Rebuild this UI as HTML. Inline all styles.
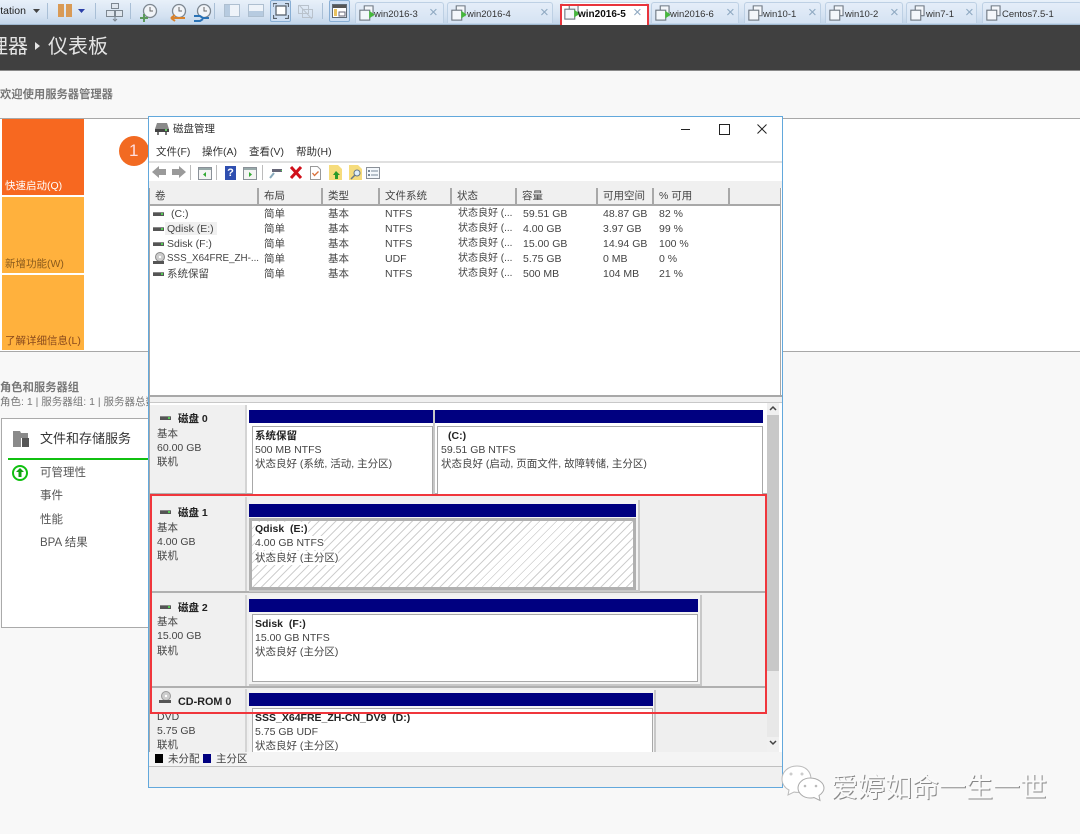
<!DOCTYPE html>
<html lang="zh"><head><meta charset="utf-8"><title>磁盘管理</title>
<style>
html{background:#f8f8f8}
html,body{margin:0;padding:0;width:1080px;height:834px;overflow:hidden}
body{position:relative;background:#f8f8f8;font-family:"Liberation Sans","Noto Sans CJK SC",sans-serif;font-size:10.5px;color:#444;filter:blur(.35px)}
.a,.t{position:absolute}
.t{white-space:nowrap;line-height:14px}
.b{font-weight:bold;color:#222}
.tab{position:absolute;top:2px;height:21px;background:linear-gradient(#e4edf8,#d5e3f3);border:1px solid #bdd0e4;border-bottom:none;border-radius:3px 3px 0 0;box-sizing:border-box}
.tab svg{transform:scale(1.1)}
.tab span{position:absolute;top:5px;font-size:9.5px;line-height:14px;color:#333;white-space:nowrap}
.tab i{position:absolute;top:2px;font-style:normal;font-size:15px;line-height:16px;color:#8fa9c2}
.sep{position:absolute;top:3px;width:1px;height:16px;background:#a9bfd6}
.hd{position:absolute;top:188px;height:18px;background:#f0f0f0;border-right:2px solid #a8a8a8;border-bottom:2px solid #a8a8a8;box-sizing:border-box;line-height:17px;padding-left:5px;color:#444;font-size:10.5px;white-space:nowrap}
.dsk{position:absolute;width:11px;height:3px;background:#555;border-top:1px solid #888}
.dsk:after{content:"";position:absolute;right:1px;top:0;width:2px;height:2px;background:#5c5}
.bar{position:absolute;height:13px;background:#000080}
.box{position:absolute;background:#fff;border:1px solid #a8a8a8;box-sizing:border-box}
.row{position:absolute;left:150px;width:617px;background:#efefef;border-bottom:2px solid #b0b0b0;box-sizing:border-box}
.lab{position:absolute;left:150px;width:97px;background:#f0f0f0;border-right:2px solid #d4d4d4;box-sizing:border-box}
.frm{position:absolute;background:#f3f3f3;border-right:2px solid #c8c8c8;border-bottom:2px solid #c8c8c8;box-sizing:border-box}
</style></head><body>

<!-- top toolbar -->
<div class="a" style="left:0;top:0;width:1080px;height:25px;background:linear-gradient(#e8f0f9,#d3e1f1 70%,#c2d5e9);border-bottom:1px solid #9fb8d0;box-sizing:border-box"></div>
<div class="t" style="left:-5px;top:4px;font-size:10.5px;color:#222">station</div>
<svg class="a" style="left:33px;top:9px" width="7" height="5"><path d="M0 0H7L3.5 4z" fill="#444"/></svg>
<div class="sep" style="left:47px"></div>
<div class="a" style="left:58px;top:4px;width:6px;height:13px;background:#d99a55"></div>
<div class="a" style="left:66px;top:4px;width:6px;height:13px;background:#d99a55"></div>
<svg class="a" style="left:78px;top:9px" width="7" height="5"><path d="M0 0H7L3.5 4z" fill="#2b3fa8"/></svg>
<div class="sep" style="left:95px"></div>
<svg class="a" style="left:105px;top:2px" width="20" height="20" fill="#dfe6ee" stroke="#7d8791"><rect x="6.500" y="1.500" width="7" height="5"/><rect x="1.500" y="8.500" width="8" height="6"/><rect x="10.500" y="8.500" width="7" height="6"/><path d="M10 15v4M8 17l2 2 2-2" fill="none"/></svg>
<div class="sep" style="left:130px"></div>
<svg class="a" style="left:139px;top:2px" width="22" height="22"><circle cx="11" cy="9" r="6.500" fill="#f1f4f8" stroke="#7d8791" stroke-width="1.300"/><path d="M11 5v4h3" fill="none" stroke="#666"/><path d="M5 12v8M1 16h8" stroke="#5b9a5b" stroke-width="2"/></svg>
<svg class="a" style="left:165px;top:2px" width="24" height="22"><circle cx="14" cy="9" r="6.500" fill="#f1f4f8" stroke="#7d8791" stroke-width="1.300"/><path d="M14 5v4h3" fill="none" stroke="#666"/><path d="M6 16h14M6 16l4-3M6 16l4 3" stroke="#d9822b" stroke-width="2" fill="none"/></svg>
<svg class="a" style="left:190px;top:2px" width="24" height="22"><circle cx="14" cy="9" r="6.500" fill="#f1f4f8" stroke="#7d8791" stroke-width="1.300"/><path d="M14 5v4h3" fill="none" stroke="#666"/><path d="M4 14h6l3 2h6M4 19h6l3-2" stroke="#2a72b5" stroke-width="2" fill="none"/></svg>
<div class="sep" style="left:214px"></div>
<svg class="a" style="left:224px;top:4px" width="16" height="14"><rect x=".5" y=".5" width="15" height="12" fill="#eef3f9" stroke="#aebfd0"/><rect x="1" y="1" width="5" height="11" fill="#b7cbe0"/></svg>
<svg class="a" style="left:248px;top:4px" width="16" height="14"><rect x=".5" y=".5" width="15" height="12" fill="#eef3f9" stroke="#aebfd0"/><rect x="1" y="7" width="14" height="5" fill="#b7cbe0"/></svg>
<div class="a" style="left:270px;top:0;width:21px;height:22px;background:#cfe0f4;border:1px solid #88aed4;border-radius:2px;box-sizing:border-box"></div>
<svg class="a" style="left:273px;top:3px" width="16" height="16" fill="none" stroke="#59636e" stroke-width="1.300"><rect x="3" y="3" width="10" height="9" fill="#fff"/><path d="M0 4V0.500H4M12 .5H15.500V4M.5 12V15.500H4M12 15.500H15.500V12"/></svg>
<svg class="a" style="left:297px;top:3px" width="17" height="17" fill="none" stroke="#b9c2cc"><rect x="1.500" y="2.500" width="10" height="8"/><rect x="5.500" y="6.500" width="10" height="8"/><path d="M2 2l13 14"/></svg>
<div class="sep" style="left:322px"></div>
<div class="a" style="left:329px;top:0;width:21px;height:22px;background:#cfe0f4;border:1px solid #88aed4;border-radius:2px;box-sizing:border-box"></div>
<svg class="a" style="left:332px;top:4px" width="15" height="14"><rect x=".5" y=".5" width="14" height="13" fill="#fff" stroke="#5f6a75"/><rect x="1" y="1" width="13" height="3" fill="#555"/><rect x="2" y="5" width="3" height="7" fill="#e9c25f"/><rect x="7" y="8" width="6" height="4" fill="none" stroke="#667"/></svg>

<!-- tabs -->
<div class="tab" style="left:355px;width:89px"><svg class="a" style="left:3px;top:3px" width="16" height="15" fill="#f4f7fb" stroke="#6d7680"><rect x="5.500" y=".5" width="8" height="9"/><rect x="1.500" y="4.500" width="9" height="9"/><path d="M10 5v7l5-3.500z" fill="#46b83c" stroke="none"/></svg><span style="left:18px">win2016-3</span><i style="left:73px">×</i></div>
<div class="tab" style="left:447px;width:106px"><svg class="a" style="left:3px;top:3px" width="16" height="15" fill="#f4f7fb" stroke="#6d7680"><rect x="5.500" y=".5" width="8" height="9"/><rect x="1.500" y="4.500" width="9" height="9"/><path d="M10 5v7l5-3.500z" fill="#46b83c" stroke="none"/></svg><span style="left:19px">win2016-4</span><i style="left:92px">×</i></div>
<div class="tab" style="left:561px;width:87px;height:23px;background:#fff;border-color:#c8d8e8"><svg class="a" style="left:2px;top:2px" width="16" height="15" fill="#f4f7fb" stroke="#6d7680"><rect x="5.500" y=".5" width="8" height="9"/><rect x="1.500" y="4.500" width="9" height="9"/><path d="M10 5v7l5-3.500z" fill="#46b83c" stroke="none"/></svg><span style="left:16px;font-size:10px;font-weight:bold;color:#111">win2016-5</span><i style="left:71px">×</i></div>
<div class="tab" style="left:651px;width:88px"><svg class="a" style="left:3px;top:3px" width="16" height="15" fill="#f4f7fb" stroke="#6d7680"><rect x="5.500" y=".5" width="8" height="9"/><rect x="1.500" y="4.500" width="9" height="9"/><path d="M10 5v7l5-3.500z" fill="#46b83c" stroke="none"/></svg><span style="left:18px">win2016-6</span><i style="left:74px">×</i></div>
<div class="tab" style="left:744px;width:77px"><svg class="a" style="left:3px;top:3px" width="16" height="15" fill="#f4f7fb" stroke="#6d7680"><rect x="5.500" y=".5" width="8" height="9"/><rect x="1.500" y="4.500" width="9" height="9"/></svg><span style="left:18px">win10-1</span><i style="left:63px">×</i></div>
<div class="tab" style="left:825px;width:78px"><svg class="a" style="left:3px;top:3px" width="16" height="15" fill="#f4f7fb" stroke="#6d7680"><rect x="5.500" y=".5" width="8" height="9"/><rect x="1.500" y="4.500" width="9" height="9"/></svg><span style="left:19px">win10-2</span><i style="left:64px">×</i></div>
<div class="tab" style="left:906px;width:71px"><svg class="a" style="left:3px;top:3px" width="16" height="15" fill="#f4f7fb" stroke="#6d7680"><rect x="5.500" y=".5" width="8" height="9"/><rect x="1.500" y="4.500" width="9" height="9"/></svg><span style="left:19px">win7-1</span><i style="left:58px">×</i></div>
<div class="tab" style="left:982px;width:100px"><svg class="a" style="left:3px;top:3px" width="16" height="15" fill="#f4f7fb" stroke="#6d7680"><rect x="5.500" y=".5" width="8" height="9"/><rect x="1.500" y="4.500" width="9" height="9"/></svg><span style="left:19px">Centos7.5-1</span></div>
<div class="a" style="left:560px;top:4px;width:89px;height:25px;border:2px solid #e8343c;box-sizing:border-box"></div>

<!-- dark header -->
<div class="a" style="left:0;top:25px;width:1080px;height:46px;background:#404040;border-bottom:1px solid #8a8a8a;box-sizing:border-box"></div>
<div class="t" style="left:-12px;top:35px;font-size:20px;line-height:24px;color:#e4e4e4">理器</div>
<svg class="a" style="left:35px;top:42px" width="5" height="8"><path d="M0 0L5 4 0 8z" fill="#e4e4e4"/></svg>
<div class="t" style="left:48px;top:35px;font-size:20px;line-height:24px;color:#e4e4e4">仪表板</div>

<div class="t" style="left:0;top:88px;font-size:11.300px;font-weight:bold;color:#777">欢迎使用服务器管理器</div>

<!-- welcome panel -->
<div class="a" style="left:0;top:118px;width:1080px;height:234px;background:#fff;border-top:1px solid #a8a8a8;border-bottom:1px solid #a8a8a8;box-sizing:border-box"></div>
<div class="a" style="left:2px;top:119px;width:82px;height:76px;background:#f76820"></div>
<div class="a" style="left:2px;top:197px;width:82px;height:76px;background:#ffb13d"></div>
<div class="a" style="left:2px;top:275px;width:82px;height:75px;background:#ffb13d"></div>
<div class="t" style="left:5px;top:179px;font-size:10.500px;color:#fff">快速启动(Q)</div>
<div class="t" style="left:5px;top:257px;font-size:10.500px;color:#8a5a1c">新增功能(W)</div>
<div class="t" style="left:5px;top:334px;font-size:10.500px;color:#8a4a1c">了解详细信息(L)</div>
<div class="a" style="left:119px;top:136px;width:30px;height:30px;border-radius:50%;background:#f26a22"></div>
<div class="t" style="left:129px;top:142px;font-size:17px;line-height:18px;color:#fdd">1</div>

<!-- roles -->
<div class="t" style="left:0;top:381px;font-size:11.300px;font-weight:bold;color:#777">角色和服务器组</div>
<div class="t" style="left:0;top:395px;font-size:10.500px;color:#777">角色: 1 | 服务器组: 1 | 服务器总数</div>
<div class="a" style="left:1px;top:418px;width:160px;height:210px;background:#fff;border:1px solid #aaa;box-sizing:border-box"></div>
<svg class="a" style="left:12px;top:430px" width="18" height="18"><path d="M1 1h7l1 2h7v5H9v9H1z" fill="#8a8a8a"/><rect x="10" y="8" width="7" height="9" fill="#555"/></svg>
<div class="t" style="left:40px;top:431px;font-size:13px;line-height:16px;color:#333">文件和存储服务</div>
<div class="a" style="left:8px;top:458px;width:145px;height:2px;background:#10c010"></div>
<svg class="a" style="left:11px;top:464px" width="18" height="18"><circle cx="9" cy="9" r="7" fill="#fff" stroke="#10c010" stroke-width="2"/><path d="M9 4l4 4h-2.500v5h-3V8H5z" fill="#10a010"/></svg>
<div class="t" style="left:40px;top:466px;font-size:11.500px;color:#555">可管理性</div>
<div class="t" style="left:40px;top:489px;font-size:11.500px;color:#555">事件</div>
<div class="t" style="left:40px;top:513px;font-size:11.500px;color:#555">性能</div>
<div class="t" style="left:40px;top:536px;font-size:11.500px;color:#555">BPA 结果</div>

<!-- window -->
<div class="a" style="left:148px;top:116px;width:635px;height:672px;background:#fff;border:1px solid #62a8dc;box-sizing:border-box"></div>
<svg class="a" style="left:155px;top:123px" width="14" height="13"><path d="M2 0h10l2 6H0z" fill="#8a8a8a"/><rect x="0" y="6" width="14" height="3" fill="#444"/><rect x="10" y="6" width="2" height="2" fill="#6c6"/><path d="M2 9h2v3H2zM10 9h2v3h-2z" fill="#777"/></svg>
<div class="t" style="left:173px;top:122px;font-size:10.500px;color:#333">磁盘管理</div>
<div class="a" style="left:681px;top:129px;width:9px;height:1px;background:#222"></div>
<div class="a" style="left:719px;top:124px;width:9px;height:9px;border:1px solid #222"></div>
<svg class="a" style="left:757px;top:124px" width="10" height="10"><path d="M.5 .5l9 9M9.500 .5l-9 9" stroke="#222"/></svg>
<div class="t" style="left:156px;top:145px;font-size:10.500px;color:#333">文件(F)</div>
<div class="t" style="left:202px;top:145px;font-size:10.500px;color:#333">操作(A)</div>
<div class="t" style="left:249px;top:145px;font-size:10.500px;color:#333">查看(V)</div>
<div class="t" style="left:296px;top:145px;font-size:10.500px;color:#333">帮助(H)</div>
<div class="a" style="left:149px;top:161px;width:633px;height:2px;background:#e0e0e0"></div>
<div class="a" style="left:149px;top:181px;width:633px;height:7px;background:#f0f0f0"></div>

<!-- window toolbar icons -->
<svg class="a" style="left:152px;top:166px" width="15" height="12"><path d="M0 6L7 0v3h7v6H7v3z" fill="#9a9a9a"/></svg>
<svg class="a" style="left:171px;top:166px" width="15" height="12"><path d="M15 6L8 0v3H1v6h7v3z" fill="#9a9a9a"/></svg>
<div class="a" style="left:190px;top:165px;width:1px;height:15px;background:#bbb"></div>
<svg class="a" style="left:198px;top:167px" width="14" height="13"><rect x=".5" y=".5" width="13" height="12" fill="#f4f4f4" stroke="#8a9098"/><rect x="1" y="1" width="12" height="2" fill="#9aa"/><path d="M8 5v5L5 7.500z" fill="#3a3"/></svg>
<div class="a" style="left:216px;top:165px;width:1px;height:15px;background:#bbb"></div>
<div class="a" style="left:225px;top:166px;width:11px;height:14px;background:#2f4fb0;color:#fff;font-size:11px;font-weight:bold;line-height:14px;text-align:center">?</div>
<svg class="a" style="left:243px;top:167px" width="14" height="13"><rect x=".5" y=".5" width="13" height="12" fill="#f4f4f4" stroke="#8a9098"/><rect x="1" y="1" width="12" height="2" fill="#9aa"/><path d="M6 5v5l3-2.500z" fill="#3a3"/></svg>
<div class="a" style="left:262px;top:165px;width:1px;height:15px;background:#bbb"></div>
<svg class="a" style="left:269px;top:167px" width="14" height="12"><path d="M3 2h10v3H3z" fill="#667"/><path d="M12 3h1v1h-1z" fill="#5c5"/><path d="M5 6L1 11" stroke="#8ab" stroke-width="2"/></svg>
<svg class="a" style="left:290px;top:166px" width="12" height="13"><path d="M1 1l10 11M11 1L1 12" stroke="#d0101a" stroke-width="3"/></svg>
<svg class="a" style="left:310px;top:166px" width="11" height="14"><path d="M.5 .5h7l3 3v10H.5z" fill="#fff" stroke="#999"/><path d="M2.500 7l2 2.500 4-4" fill="none" stroke="#d9703a" stroke-width="1.300"/></svg>
<svg class="a" style="left:329px;top:165px" width="13" height="15"><path d="M0 0h9l4 4v11H0z" fill="#f6dc7c"/><path d="M7 6l4 4H9v4H6v-4H4z" fill="#2a9a2a"/></svg>
<svg class="a" style="left:349px;top:165px" width="13" height="15"><path d="M0 0h9l4 4v11H0z" fill="#f6dc7c"/><circle cx="8" cy="8" r="3" fill="#dfeefa" stroke="#678"/><path d="M6 10l-4 4" stroke="#678" stroke-width="1.500"/></svg>
<svg class="a" style="left:366px;top:167px" width="14" height="12"><rect x=".5" y=".5" width="13" height="11" fill="#f4f8fc" stroke="#8a9098"/><rect x="2" y="3" width="2" height="2" fill="#789"/><rect x="2" y="7" width="2" height="2" fill="#789"/><path d="M5 4h7M5 8h7" stroke="#789"/></svg>

<!-- list header -->
<div class="hd" style="left:150px;width:109px">卷</div>
<div class="hd" style="left:259px;width:64px">布局</div>
<div class="hd" style="left:323px;width:57px">类型</div>
<div class="hd" style="left:380px;width:72px">文件系统</div>
<div class="hd" style="left:452px;width:65px">状态</div>
<div class="hd" style="left:517px;width:81px">容量</div>
<div class="hd" style="left:598px;width:56px">可用空间</div>
<div class="hd" style="left:654px;width:76px">% 可用</div>
<div class="hd" style="left:730px;width:50px;border-right:none"></div>

<!-- list rows -->
<div class="dsk" style="left:153px;top:212px"></div>
<div class="dsk" style="left:153px;top:227px"></div>
<div class="dsk" style="left:153px;top:242px"></div>
<div class="dsk" style="left:153px;top:272px"></div>
<svg class="a" style="left:153px;top:252px" width="12" height="13"><circle cx="7" cy="5" r="4.500" fill="#ccc" stroke="#888"/><circle cx="7" cy="5" r="1.200" fill="#fff"/><rect x="0" y="9" width="11" height="3" fill="#555"/></svg>
<div class="a" style="left:165px;top:222px;width:52px;height:13px;background:#f0f0f0"></div>
<div class="t" style="left:171px;top:207px">(C:)</div>
<div class="t" style="left:167px;top:222px">Qdisk (E:)</div>
<div class="t" style="left:167px;top:237px">Sdisk (F:)</div>
<div class="t" style="left:167px;top:252px;font-size:9.800px">SSS_X64FRE_ZH-...</div>
<div class="t" style="left:167px;top:267px">系统保留</div>
<div class="t" style="left:264px;top:207px">简单</div><div class="t" style="left:328px;top:207px">基本</div><div class="t" style="left:385px;top:207px">NTFS</div><div class="t" style="left:458px;top:207px;font-size:10px">状态良好 (...</div><div class="t" style="left:523px;top:207px">59.51 GB</div><div class="t" style="left:603px;top:207px">48.87 GB</div><div class="t" style="left:659px;top:207px">82 %</div>
<div class="t" style="left:264px;top:222px">简单</div><div class="t" style="left:328px;top:222px">基本</div><div class="t" style="left:385px;top:222px">NTFS</div><div class="t" style="left:458px;top:222px;font-size:10px">状态良好 (...</div><div class="t" style="left:523px;top:222px">4.00 GB</div><div class="t" style="left:603px;top:222px">3.97 GB</div><div class="t" style="left:659px;top:222px">99 %</div>
<div class="t" style="left:264px;top:237px">简单</div><div class="t" style="left:328px;top:237px">基本</div><div class="t" style="left:385px;top:237px">NTFS</div><div class="t" style="left:458px;top:237px;font-size:10px">状态良好 (...</div><div class="t" style="left:523px;top:237px">15.00 GB</div><div class="t" style="left:603px;top:237px">14.94 GB</div><div class="t" style="left:659px;top:237px">100 %</div>
<div class="t" style="left:264px;top:252px">简单</div><div class="t" style="left:328px;top:252px">基本</div><div class="t" style="left:385px;top:252px">UDF</div><div class="t" style="left:458px;top:252px;font-size:10px">状态良好 (...</div><div class="t" style="left:523px;top:252px">5.75 GB</div><div class="t" style="left:603px;top:252px">0 MB</div><div class="t" style="left:659px;top:252px">0 %</div>
<div class="t" style="left:264px;top:267px">简单</div><div class="t" style="left:328px;top:267px">基本</div><div class="t" style="left:385px;top:267px">NTFS</div><div class="t" style="left:458px;top:267px;font-size:10px">状态良好 (...</div><div class="t" style="left:523px;top:267px">500 MB</div><div class="t" style="left:603px;top:267px">104 MB</div><div class="t" style="left:659px;top:267px">21 %</div>

<!-- splitter -->
<div class="a" style="left:149px;top:395px;width:633px;height:8px;background:#f0f0f0;border-top:2px solid #a8a8a8;border-bottom:1px solid #c8c8c8;box-sizing:border-box"></div>

<!-- disk area -->
<div class="a" style="left:150px;top:403px;width:629px;height:349px;background:#efefef"></div>
<div class="row" style="top:403px;height:92px;background:#fff"></div>
<div class="lab" style="top:405px;height:88px"></div>
<div class="row" style="top:495px;height:98px"></div>
<div class="lab" style="top:497px;height:94px"></div>
<div class="row" style="top:593px;height:95px"></div>
<div class="lab" style="top:595px;height:91px"></div>
<div class="lab" style="top:689px;height:63px"></div>

<!-- disk 0 -->
<div class="dsk" style="left:160px;top:416px"></div>
<div class="t b" style="left:178px;top:412px">磁盘 0</div>
<div class="t" style="left:157px;top:427px">基本</div>
<div class="t" style="left:157px;top:441px">60.00 GB</div>
<div class="t" style="left:157px;top:455px">联机</div>
<div class="bar" style="left:249px;top:410px;width:184px"></div>
<div class="bar" style="left:435px;top:410px;width:328px"></div>
<div class="box" style="left:252px;top:426px;width:181px;height:68px;border-bottom:none"></div>
<div class="box" style="left:437px;top:426px;width:326px;height:68px;border-bottom:none"></div>
<div class="a" style="left:433px;top:410px;width:2px;height:84px;background:#c8c8c8"></div>
<div class="t b" style="left:255px;top:429px">系统保留</div>
<div class="t" style="left:255px;top:443px">500 MB NTFS</div>
<div class="t" style="left:255px;top:457px">状态良好 (系统, 活动, 主分区)</div>
<div class="t b" style="left:448px;top:429px">(C:)</div>
<div class="t" style="left:441px;top:443px">59.51 GB NTFS</div>
<div class="t" style="left:441px;top:457px">状态良好 (启动, 页面文件, 故障转储, 主分区)</div>

<!-- disk 1 -->
<div class="frm" style="left:249px;top:500px;width:391px;height:92px"></div>
<div class="dsk" style="left:160px;top:510px"></div>
<div class="t b" style="left:178px;top:506px">磁盘 1</div>
<div class="t" style="left:157px;top:521px">基本</div>
<div class="t" style="left:157px;top:535px">4.00 GB</div>
<div class="t" style="left:157px;top:549px">联机</div>
<div class="bar" style="left:249px;top:504px;width:387px"></div>
<div class="a" style="left:249px;top:518px;width:387px;height:72px;border:3px solid #b0b0b0;box-sizing:border-box;background:repeating-linear-gradient(135deg,#fff 0 5px,#cfcfcf 5px 6px)"></div>
<div class="t b" style="left:255px;top:522px;background:#fff">Qdisk&nbsp; (E:)</div>
<div class="t" style="left:255px;top:536px;background:#fff">4.00 GB NTFS</div>
<div class="t" style="left:255px;top:551px;background:#fff">状态良好 (主分区)</div>

<!-- disk 2 -->
<div class="frm" style="left:249px;top:595px;width:453px;height:91px"></div>
<div class="dsk" style="left:160px;top:605px"></div>
<div class="t b" style="left:178px;top:601px">磁盘 2</div>
<div class="t" style="left:157px;top:615px">基本</div>
<div class="t" style="left:157px;top:629px">15.00 GB</div>
<div class="t" style="left:157px;top:644px">联机</div>
<div class="bar" style="left:249px;top:599px;width:449px"></div>
<div class="box" style="left:252px;top:614px;width:446px;height:68px"></div>
<div class="t b" style="left:255px;top:617px">Sdisk&nbsp; (F:)</div>
<div class="t" style="left:255px;top:631px">15.00 GB NTFS</div>
<div class="t" style="left:255px;top:645px">状态良好 (主分区)</div>

<!-- cd-rom -->
<div class="frm" style="left:249px;top:690px;width:407px;height:62px;border-bottom:none"></div>
<svg class="a" style="left:159px;top:691px" width="13" height="13"><circle cx="7" cy="5" r="4.500" fill="#ccc" stroke="#999"/><circle cx="7" cy="5" r="1.200" fill="#fff"/><rect x="0" y="9" width="12" height="3" fill="#555"/></svg>
<div class="t b" style="left:178px;top:695px;font-size:10.800px">CD-ROM 0</div>
<div class="t" style="left:157px;top:710px">DVD</div>
<div class="t" style="left:157px;top:724px">5.75 GB</div>
<div class="t" style="left:157px;top:738px">联机</div>
<div class="bar" style="left:249px;top:693px;width:404px"></div>
<div class="box" style="left:252px;top:708px;width:401px;height:44px;border-bottom:none"></div>
<div class="t b" style="left:255px;top:711px">SSS_X64FRE_ZH-CN_DV9&nbsp; (D:)</div>
<div class="t" style="left:255px;top:725px">5.75 GB UDF</div>
<div class="t" style="left:255px;top:739px">状态良好 (主分区)</div>

<!-- scrollbar -->
<div class="a" style="left:767px;top:403px;width:12px;height:349px;background:#c8c8c8"></div>
<div class="a" style="left:767px;top:403px;width:12px;height:12px;background:#f0f0f0"></div>
<div class="a" style="left:767px;top:671px;width:12px;height:66px;background:#e8e8e8"></div>
<div class="a" style="left:767px;top:737px;width:12px;height:15px;background:#f0f0f0"></div>
<svg class="a" style="left:769px;top:405px" width="8" height="6"><path d="M1 5l3-3 3 3" fill="none" stroke="#444" stroke-width="1.500"/></svg>
<svg class="a" style="left:769px;top:740px" width="8" height="6"><path d="M1 1l3 3 3-3" fill="none" stroke="#444" stroke-width="1.500"/></svg>
<div class="a" style="left:779px;top:403px;width:3px;height:349px;background:#fff"></div>

<!-- legend & status -->
<div class="a" style="left:149px;top:752px;width:633px;height:15px;background:#f4f4f4;border-bottom:1px solid #c0c0c0;box-sizing:border-box"></div>
<div class="a" style="left:155px;top:754px;width:8px;height:9px;background:#000"></div>
<div class="t" style="left:168px;top:752px">未分配</div>
<div class="a" style="left:203px;top:754px;width:8px;height:9px;background:#000080"></div>
<div class="t" style="left:216px;top:752px">主分区</div>
<div class="a" style="left:149px;top:767px;width:633px;height:20px;background:#f0f0f0"></div>

<!-- list/disk frame edges -->
<div class="a" style="left:149px;top:188px;width:1px;height:564px;background:#a8a8a8"></div>
<div class="a" style="left:780px;top:188px;width:1px;height:207px;background:#a8a8a8"></div>

<!-- red box -->
<div class="a" style="left:150px;top:494px;width:617px;height:220px;border:2px solid #f0363c;box-sizing:border-box"></div>

<!-- watermark -->
<svg class="a" style="left:781px;top:764px" width="44" height="40"><path d="M16 2C7 2 1 8 1 15c0 5 3 9 7 11l-1 5 6-3c2 .5 4 .5 6 .3C28 27 30 18 30 15 30 8 25 2 16 2z" fill="#fff" stroke="#bbb"/><path d="M29 14c-7 0-12 5-12 10s5 10 12 10c1 0 3 0 4-.5l6 3-1-5c3-2 5-4.500 5-7.500 0-5-6-10-14-10z" fill="#fff" stroke="#aaa"/><circle cx="10" cy="10" r="1.500" fill="#ccc"/><circle cx="21" cy="10" r="1.500" fill="#ccc"/><circle cx="24" cy="22" r="1.300" fill="#bbb"/><circle cx="35" cy="22" r="1.300" fill="#bbb"/></svg>
<div class="t" style="left:831px;top:771px;font-size:27px;line-height:34px;color:#fafafa;text-shadow:1px 1px 0 #888">爱婷如命一生一世</div>

</body></html>
